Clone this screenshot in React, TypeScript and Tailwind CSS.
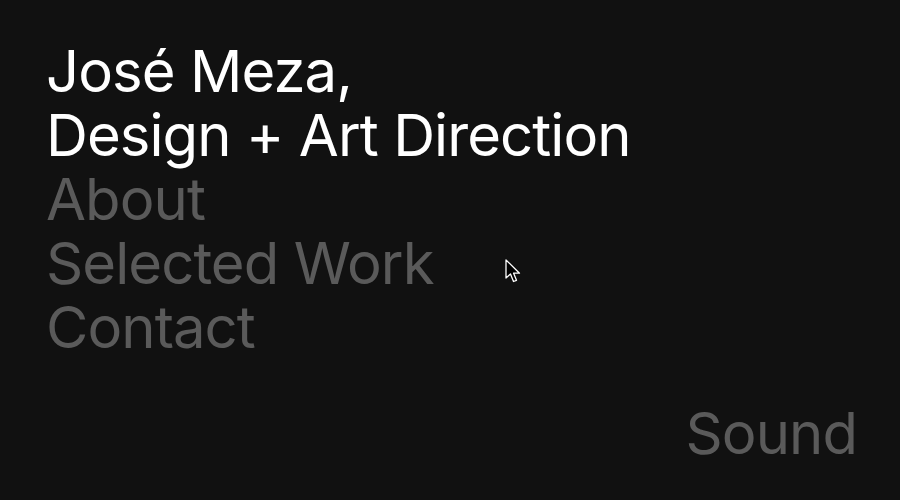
import React from 'react';

const links = ['About', 'Selected Work', 'Contact'];

// mouse pointer seen in the capture
const Cursor: React.FC = () => (
  <svg width="18" height="26" viewBox="0 0 18 26" className="absolute left-[505px] top-[259px]">
    <path
      d="M1 1 L1 19 L5.5 15 L8.5 22.5 L11.5 21.3 L8.6 14.2 L14.5 14.2 Z"
      fill="#000"
      stroke="#fff"
      strokeWidth="1.3"
      strokeLinejoin="round"
    />
  </svg>
);

const App: React.FC = () => {
  return (
    <div
      className="relative h-[500px] w-full overflow-hidden bg-[#111111] flex flex-col justify-between pl-[46px] pr-[43px] pt-[39px] pb-[35px]"
      style={{ fontFamily: 'Inter, "Liberation Sans", sans-serif' }}
    >
      <div className="text-[58px] leading-[64px] tracking-[-0.016em]">
        <h1 className="text-white font-normal">
          José Meza,
          <br />
          Design + Art Direction
        </h1>
        <nav className="flex flex-col">
          {links.map((l) => (
            <a key={l} href="#" className="text-[#5a5a5a] w-fit">
              {l}
            </a>
          ))}
        </nav>
      </div>
      <div className="self-end text-[58px] leading-[64px] tracking-[-0.016em] text-[#5a5a5a]">Sound</div>
      <Cursor />
    </div>
  );
};

export default App;
